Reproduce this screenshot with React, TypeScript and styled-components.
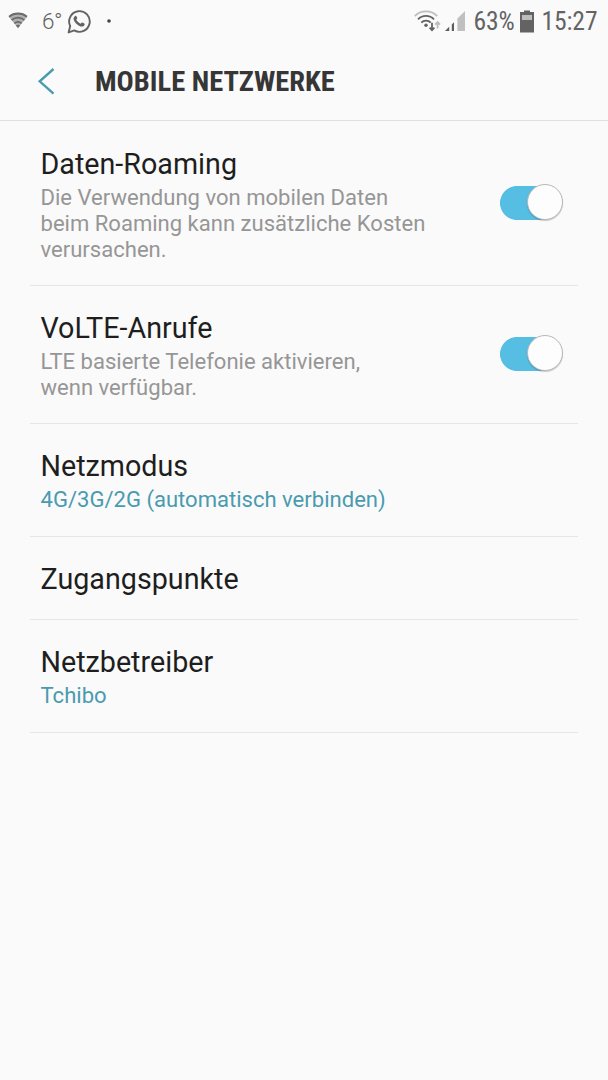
import React from 'react';
import styled, { createGlobalStyle } from 'styled-components';

const GlobalStyle = createGlobalStyle`
  * { box-sizing: border-box; }
  body { margin: 0; background: #fafafa; font-family: Roboto, "Liberation Sans", sans-serif; }
`;

const Screen = styled.main`
  width: 608px;
  height: 1080px;
  background: #fafafa;
  overflow: hidden;
`;

const StatusBar = styled.div`
  height: 42px;
  display: flex;
  justify-content: space-between;
  padding: 0 10px 0 8px;
  color: #636363;
`;

const StatusGroup = styled.div`
  display: flex;
  align-items: center;
  height: 42px;
`;

const StatusText = styled.span<{ $left: number; $width: number; $light?: boolean }>`
  display: block;
  flex: none;
  margin-left: ${p => p.$left}px;
  width: ${p => p.$width}px;
  font-family: ${p => (p.$light ? 'Roboto' : '"Roboto Condensed"')}, sans-serif;
  font-size: ${p => (p.$light ? 22.5 : 25.6)}px;
  font-weight: ${p => (p.$light ? 300 : 400)};
  letter-spacing: ${p => (p.$light ? -0.6 : -0.1)}px;
  line-height: 42px;
  white-space: nowrap;
`;

const Icon = styled.svg<{ $left?: number }>`
  display: block;
  flex: none;
  margin-left: ${p => p.$left ?? 0}px;
`;

const Header = styled.header`
  height: 79px;
  display: flex;
  align-items: center;
  padding-left: 37px;
  border-bottom: 1px solid #dfdfdf;
`;

const BackButton = styled.button`
  display: block;
  width: 58px;
  padding: 0;
  border: 0;
  background: none;
`;

const Heading = styled.h1`
  margin: 2px 0 0;
  font-family: "Roboto Condensed", Roboto, sans-serif;
  font-size: 28.5px;
  line-height: 40px;
  font-weight: 700;
  color: #363636;
  white-space: nowrap;
`;

const List = styled.section`
  padding: 1px 30px 0;
`;

const Row = styled.div<{ $bottom: number }>`
  display: flex;
  justify-content: space-between;
  align-items: center;
  padding: 25px 15px ${p => p.$bottom}px 11px;
  border-bottom: 1px solid #e6e6e6;
`;

const RowTitle = styled.div`
  margin-left: -0.5px;
  font-size: 28.7px;
  line-height: 34px;
  color: #1e1e1e;
  white-space: nowrap;
`;

const SummaryBlock = styled.div`
  margin-left: -0.5px;
  padding-top: 4px;
`;

const Summary = styled.div<{ $accent?: boolean }>`
  font-size: 22.06px;
  line-height: 26px;
  color: ${p => (p.$accent ? '#4a9bb0' : '#969696')};
  white-space: nowrap;
`;

const Track = styled.div`
  width: 63px;
  height: 37px;
  margin-bottom: 5px;
  padding-left: 27px;
  background: linear-gradient(#56bee3, #56bee3) 17px 2px / 28px 34px no-repeat,
    radial-gradient(circle at 17px 19px, #56bee3 16.6px, transparent 17.3px);
`;

const Thumb = styled.div`
  width: 36px;
  height: 36px;
  border-radius: 50%;
  background: #fdfdfd;
  border: 1px solid #b8b8b8;
  box-shadow: 0 1px 1px rgba(0, 0, 0, 0.2);
`;

const Toggle = () => (
  <Track role="switch" aria-checked="true">
    <Thumb />
  </Track>
);

type SettingRow = { title: string; lines: string[]; bottom: number; toggle?: boolean; accent?: boolean };

const rows: SettingRow[] = [
  { title: 'Daten-Roaming', lines: ['Die Verwendung von mobilen Daten', 'beim Roaming kann zusätzliche Kosten', 'verursachen.'], toggle: true, bottom: 22 },
  { title: 'VoLTE-Anrufe', lines: ['LTE basierte Telefonie aktivieren,', 'wenn verfügbar.'], toggle: true, bottom: 22 },
  { title: 'Netzmodus', lines: ['4G/3G/2G (automatisch verbinden)'], accent: true, bottom: 23 },
  { title: 'Zugangspunkte', lines: [], bottom: 23 },
  { title: 'Netzbetreiber', lines: ['Tchibo'], accent: true, bottom: 23 },
];

export default function App() {
  return (
    <Screen>
      <GlobalStyle />
      <StatusBar>
        <StatusGroup>
          <Icon width="20" height="18" viewBox="0 0 20 18">
            <path d="M10 16 0.8 4.7C6 -0.3 14 -0.3 19.2 4.7Z" fill="#b0b0b0" />
            <g fill="none" stroke="#6a6a6a" strokeWidth="1.8">
              <path d="M1 4.7C6 0.4 14 0.4 19 4.7" />
              <path d="M3.6 8.1C7.3 4.9 12.7 4.9 16.4 8.1" />
              <path d="M6.4 11.4C8.5 9.6 11.5 9.6 13.6 11.4" />
            </g>
            <path d="M10 16.1 7.8 13.5Q10 12.1 12.2 13.5Z" fill="#6a6a6a" />
          </Icon>
          <StatusText $left={14} $width={25} $light>6°</StatusText>
          <Icon width="24" height="25" viewBox="0 0 24 25">
            <path d="M1.6 23.4 3.2 17A10.3 10.3 0 1 1 7.3 21.4Z" fill="none" stroke="#636363" strokeWidth="1.9" strokeLinejoin="round" />
            <path transform="translate(0 .6)" d="M8.2 6.3C8.6 6 9.2 6.1 9.4 6.6L10.2 8.5C10.4 9.1 9.6 9.8 9.3 10.2C10.2 12 11.8 13.4 13.8 14.1C14.3 13.6 14.7 12.8 15.3 13L17.3 14C17.8 14.2 17.7 14.9 17.5 15.4C16.8 17 14.9 17.3 13.4 16.8C10.3 15.7 7.9 13.4 6.8 10.5C6.2 9 6.8 7.2 8.2 6.3Z" fill="#636363" />
          </Icon>
          <Icon $left={15} width="5" height="5" viewBox="0 0 5 5"><circle cx="3" cy="2" r="1.8" fill="#444" /></Icon>
        </StatusGroup>
        <StatusGroup>
          <Icon width="27" height="22" viewBox="0 0 27 22" fill="none">
            <path d="M0.8 6.1C6.8 -0.2 17.2 -0.2 23.2 6.1" stroke="#bdbdbd" strokeWidth="1.8" />
            <g stroke="#636363" strokeWidth="1.8">
              <path d="M4 9.4C8.4 4.8 15.6 4.8 20 9.4" />
              <path d="M7.3 12.7C9.9 9.9 14.1 9.9 16.7 12.7" />
              <path d="M18 12.7V20M15.6 17.6 18 20.1 20.4 17.6" />
            </g>
            <circle cx="12" cy="15.3" r="1.7" fill="#636363" />
            <path d="M23.6 18.5V12.2M21.2 14.6 23.6 12.1 26 14.6" stroke="#bdbdbd" strokeWidth="1.8" />
          </Icon>
          <Icon $left={4} width="20" height="20" viewBox="0 0 20 20">
            <path d="M0 20 4.2 15.8V20ZM6.8 13.4 9 11.2V20H6.8Z" fill="#5c5c5c" />
            <path d="M12.4 7.6 20 0V20H12.4Z" fill="#c0c0c0" />
          </Icon>
          <StatusText $left={8} $width={47}>63%</StatusText>
          <Icon width="14" height="23" viewBox="0 0 14 23">
            <path d="M4 0.5H10V2H14V22.5H0V2H4Z" fill="#636363" />
            <path d="M2 5H12V10H2Z" fill="#bdbdbd" />
          </Icon>
          <StatusText $left={7} $width={56.6}>15:27</StatusText>
        </StatusGroup>
      </StatusBar>
      <Header>
        <BackButton aria-label="Zurück">
          <Icon width="18" height="28" viewBox="0 0 18 28">
            <path d="M16.5 2 2.7 14.3 16.5 26.6" fill="none" stroke="#4a9bb0" strokeWidth="2.4" />
          </Icon>
        </BackButton>
        <Heading>MOBILE NETZWERKE</Heading>
      </Header>
      <List>
        {rows.map(row => (
          <Row key={row.title} $bottom={row.bottom}>
            <div>
              <RowTitle>{row.title}</RowTitle>
              {row.lines.length > 0 && (
                <SummaryBlock>
                  {row.lines.map(line => (
                    <Summary key={line} $accent={row.accent}>{line}</Summary>
                  ))}
                </SummaryBlock>
              )}
            </div>
            {row.toggle && <Toggle />}
          </Row>
        ))}
      </List>
    </Screen>
  );
}
